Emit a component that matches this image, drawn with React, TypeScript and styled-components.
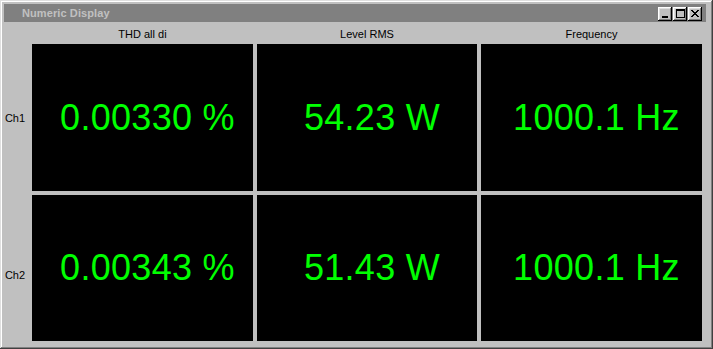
import React from "react";
import styled, { createGlobalStyle } from "styled-components";

const GlobalStyle = createGlobalStyle`
  html, body {
    margin: 0;
    padding: 0;
    background: #c0c0c0;
  }
  body {
    font-family: "Liberation Sans", Arial, sans-serif;
  }
`;

const Window = styled.div`
  box-sizing: border-box;
  width: 713px;
  height: 349px;
  background: #c0c0c0;
  padding: 4px 7px 8px 4px;
  box-shadow: inset -1px -1px #404040, inset 1px 1px #dfdfdf,
    inset -2px -2px #808080, inset 2px 2px #ffffff;
  display: flex;
  flex-direction: column;
`;

const TitleBar = styled.div`
  height: 18px;
  background: #808080;
  display: flex;
  align-items: center;
  justify-content: space-between;
  padding: 0 4px 0 18px;
`;

const Title = styled.span`
  color: #c0c0c0;
  font-weight: bold;
  font-size: 11px;
  letter-spacing: 0.1px;
`;

const Controls = styled.div`
  display: flex;
  gap: 1px;
  padding-top: 1px;
`;

const CtrlButton = styled.div`
  box-sizing: border-box;
  width: 14px;
  height: 14px;
  background: #c0c0c0;
  box-shadow: inset -1px -1px #000000, inset 1px 1px #ffffff,
    inset -2px -2px #808080, inset 2px 2px #dfdfdf;
  display: flex;
  align-items: center;
  justify-content: center;

  svg {
    display: block;
  }
`;

const Grid = styled.div`
  display: grid;
  grid-template-columns: 24px 221px 220px 221px;
  grid-template-rows: 22px 147px 150px;
  column-gap: 4px;
`;

const ColHeader = styled.div`
  display: flex;
  align-items: center;
  justify-content: center;
  font-size: 11px;
  color: #000;
  padding-top: 2px;
`;

const RowLabel = styled.div<{ $last?: boolean }>`
  display: flex;
  align-items: center;
  justify-content: center;
  font-size: 11px;
  color: #000;
  padding-right: 2px;
  padding-top: ${(p) => (p.$last ? "18px" : "0")};
`;

const Cell = styled.div<{ $last?: boolean }>`
  box-sizing: border-box;
  background: #000;
  display: flex;
  align-items: center;
  justify-content: center;
  padding-left: 10px;
  color: #00ff00;
  font-size: 36px;
  letter-spacing: 0.3px;
  white-space: nowrap;
  margin-top: ${(p) => (p.$last ? "4px" : "0")};
  height: ${(p) => (p.$last ? "146px" : "147px")};
`;

const columns = ["THD all di", "Level RMS", "Frequency"];
const rows = [
  { label: "Ch1", values: ["0.00330 %", "54.23 W", "1000.1 Hz"] },
  { label: "Ch2", values: ["0.00343 %", "51.43 W", "1000.1 Hz"] },
];

export default function App() {
  return (
    <>
      <GlobalStyle />
      <Window>
        <TitleBar>
          <Title>Numeric Display</Title>
          <Controls>
            <CtrlButton>
              <svg width="8" height="8" viewBox="0 0 8 8">
                <rect x="1" y="6" width="6" height="2" fill="#000" />
              </svg>
            </CtrlButton>
            <CtrlButton>
              <svg width="9" height="9" viewBox="0 0 9 9">
                <rect x="0.5" y="0.5" width="8" height="8" fill="none" stroke="#000" />
                <rect x="0" y="0" width="9" height="2" fill="#000" />
              </svg>
            </CtrlButton>
            <CtrlButton>
              <svg width="8" height="7" viewBox="0 0 8 7" shapeRendering="crispEdges">
                <path d="M0 0h2v1H0zM6 0h2v1H6zM1 1h2v1H1zM5 1h2v1H5zM2 2h4v1H2zM3 3h2v1H3zM2 4h4v1H2zM1 5h2v1H1zM5 5h2v1H5zM0 6h2v1H0zM6 6h2v1H6z" fill="#000" />
              </svg>
            </CtrlButton>
          </Controls>
        </TitleBar>
        <Grid>
          <div />
          {columns.map((c) => (
            <ColHeader key={c}>{c}</ColHeader>
          ))}
          {rows.map((r, i) => (
            <React.Fragment key={r.label}>
              <RowLabel $last={i === 1}>{r.label}</RowLabel>
              {r.values.map((v, j) => (
                <Cell key={j} $last={i === 1}>
                  {v}
                </Cell>
              ))}
            </React.Fragment>
          ))}
        </Grid>
      </Window>
    </>
  );
}
